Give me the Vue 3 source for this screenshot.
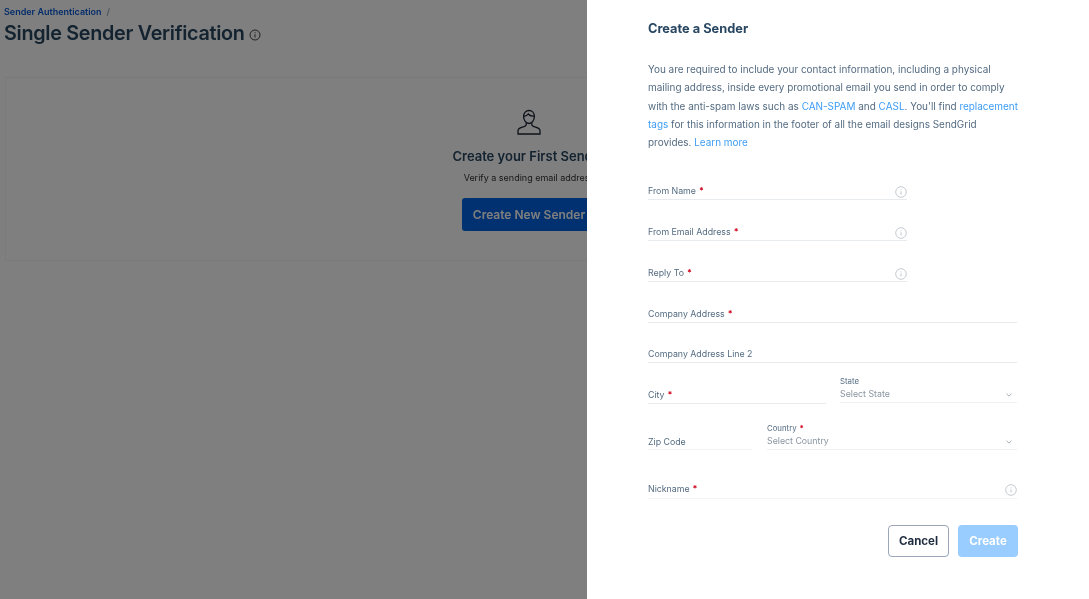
<template>
  <div class="page">
    <main class="content">
      <div class="crumbs"><a>Sender Authentication</a><span>/</span></div>
      <h1 class="title">
        Single Sender Verification
        <svg class="title-info" viewBox="0 0 12 12" width="12" height="12">
          <circle cx="6" cy="6" r="5" fill="none" stroke="currentColor" />
          <path d="M6 5.2v3.3M6 3.2v1" fill="none" stroke="currentColor" />
        </svg>
      </h1>
      <section class="empty-card">
        <svg class="user-icon" viewBox="0 0 24 26" width="24" height="26" fill="none" stroke="#1d2733" stroke-width="1.3">
          <path d="M6.6 7.5c0-3.6 2.300-6 5.400-6s5.400 2.400 5.400 6c0 3.800-2.400 7-5.400 7s-5.400-3.200-5.400-7z" />
          <path d="M6.800 7c2 .3 3.400-.5 4.400-2 1 1.400 3.400 2.300 6 2" />
          <path d="M9.200 13.500v2.300c0 1-.8 1.500-3 2.100C3 18.800 1 19.700 1 21.500V25h22v-3.500c0-1.800-2-2.700-5.200-3.600-2.200-.6-3-1.100-3-2.100v-2.300" />
        </svg>
        <h2>Create your First Sender</h2>
        <p>Verify a sending email address</p>
        <button class="primary">Create New Sender</button>
      </section>
    </main>

    <div class="overlay"></div>

    <aside class="drawer">
      <h3>Create a Sender</h3>
      <p class="intro">
        You are required to include your contact information, including a physical<br />
        mailing address, inside every promotional email you send in order to comply<br />
        with the anti-spam laws such as <a>CAN-SPAM</a> and <a>CASL</a>. You'll find <a>replacement</a><br />
        <a>tags</a> for this information in the footer of all the email designs SendGrid<br />
        provides. <a>Learn more</a>
      </p>

      <form class="form" @submit.prevent>
        <div v-for="f in topFields" :key="f.label" class="row" :class="{ short: f.info }">
          <label class="field">
            <span>{{ f.label }}<i v-if="f.required">*</i></span>
          </label>
          <svg v-if="f.info" class="info" viewBox="0 0 12 12" width="12" height="12">
            <circle cx="6" cy="6" r="5.300" fill="none" stroke="currentColor" stroke-width=".8" />
            <path d="M6 5.400v3M6 3.400v.9" fill="none" stroke="currentColor" stroke-width=".9" />
          </svg>
        </div>

        <div class="pair city-state">
          <label class="field"><span>City<i>*</i></span></label>
          <label class="select">
            <small>State</small>
            <span>Select State</span>
            <svg viewBox="0 0 8 5" width="6" height="4"><path d="M.7.8 4 4l3.300-3.200" fill="none" stroke="currentColor" /></svg>
          </label>
        </div>

        <div class="pair zip-country">
          <label class="field light"><span>Zip Code</span></label>
          <label class="select">
            <small>Country<i>*</i></small>
            <span>Select Country</span>
            <svg viewBox="0 0 8 5" width="6" height="4"><path d="M.7.8 4 4l3.300-3.200" fill="none" stroke="currentColor" /></svg>
          </label>
        </div>

        <div class="row nickname">
          <label class="field light"><span>Nickname<i>*</i></span></label>
          <svg class="info" viewBox="0 0 12 12" width="12" height="12">
            <circle cx="6" cy="6" r="5.300" fill="none" stroke="currentColor" stroke-width=".8" />
            <path d="M6 5.400v3M6 3.400v.9" fill="none" stroke="currentColor" stroke-width=".9" />
          </svg>
        </div>

        <div class="actions">
          <button class="cancel" type="button">Cancel</button>
          <button class="create" type="submit">Create</button>
        </div>
      </form>
    </aside>
  </div>
</template>

<script setup>
const topFields = [
  { label: 'From Name', required: true, info: true },
  { label: 'From Email Address', required: true, info: true },
  { label: 'Reply To', required: true, info: true },
  { label: 'Company Address', required: true },
  { label: 'Company Address Line 2' },
]
</script>

<style>
html, body { margin: 0; overflow: hidden; }
</style>

<style scoped>
.page {
  position: relative;
  width: 1089px;
  height: 599px;
  overflow: hidden;
  background: #fff;
  font-family: Inter, "Noto Sans", sans-serif;
  filter: blur(0.35px);
}

.content { padding: 6px 36px 0 4px; }
.crumbs { display: flex; gap: 5px; font-size: 9px; line-height: 11px; font-weight: 600; color: #9aa5b1; }
.crumbs a { color: #0a5bd3; }
.title { display: flex; align-items: center; margin: 2px 0 0; font-size: 19.800px; line-height: 28px; font-weight: 600; letter-spacing: -0.3px; color: #294661; }
.title-info { margin: 3px 0 0 4px; color: #444; }

.empty-card {
  display: flex;
  flex-direction: column;
  align-items: center;
  height: 184px;
  box-sizing: border-box;
  margin: 30px 0 0 1px;
  padding-top: 31px;
  border: 1px solid #f5f5f5;
}
.user-icon { display: block; }
.empty-card h2 { margin: 12px 0 0; font-size: 13px; line-height: 18px; font-weight: 600; color: #294661; }
.empty-card p { margin: 7px 0 0; font-size: 9px; line-height: 12px; color: #333; }
.primary { margin-top: 14px; width: 135px; height: 33px; border: 0; border-radius: 3px; background: #0263e0; color: #fff; font: 600 12px Inter, sans-serif; }

.overlay { position: absolute; inset: 0; background: rgba(0, 0, 0, 0.5); }

.drawer {
  position: absolute;
  top: 0;
  right: 0;
  bottom: 0;
  width: 502px;
  box-sizing: border-box;
  padding: 21px 72px 0 61px;
  background: #fff;
}
.drawer h3 { margin: 0; font-size: 12.800px; line-height: 16px; font-weight: 700; color: #294661; }
.intro { margin: 23px 0 0; font-size: 9.950px; line-height: 18.300px; color: #546b81; white-space: nowrap; }
.intro a { color: #3d9cf5; }

.form { display: flex; flex-direction: column; margin-top: 24px; }
.row { display: flex; align-items: center; height: 25px; margin-bottom: 16px; position: relative; }
.row:nth-child(4) { margin-bottom: 15px; }
.row.short .field { width: 259px; flex: none; }
.field {
  flex: 1;
  display: flex;
  align-items: flex-end;
  box-sizing: border-box;
  height: 25px;
  padding-bottom: 2px;
  border-bottom: 1px solid #e8ebee;
  font-size: 8.800px;
  line-height: 12px;
  color: #546b81;
}
.field.light { border-bottom-color: #f1f3f5; }
.field i, .select i { font-style: normal; color: #d0021b; margin-left: 3px; font-weight: 700; }
.info { color: #b5bec7; }
.short .info { position: absolute; left: 247px; top: 11px; }

.pair { display: flex; align-items: flex-end; }
.city-state { gap: 14px; height: 25px; }
.city-state .field { width: 178px; flex: none; }
.city-state .select { margin-bottom: 1px; }
.zip-country { gap: 15px; height: 30px; margin-top: 16px; }
.zip-country .field { width: 104px; flex: none; padding-bottom: 1px; }

.select {
  flex: 1;
  position: relative;
  display: flex;
  flex-direction: column;
  box-sizing: border-box;
  border-bottom: 1px solid #eef0f2;
  font-size: 8.800px;
  line-height: 12px;
  color: #8a95a1;
  padding-bottom: 2px;
}
.select small { font-size: 7.800px; line-height: 13px; color: #546b81; }
.select svg { position: absolute; right: 5px; bottom: 5px; color: #8a95a1; }

.nickname { margin: 24px 0 0; }
.nickname .field { padding-bottom: 3px; }
.nickname .info { position: absolute; right: 0; top: 10px; }

.actions { display: flex; justify-content: flex-end; gap: 9px; margin: 26px -1px 0 0; }
.actions button { width: 61px; height: 32px; border-radius: 4px; font: 700 11.500px Inter, sans-serif; box-sizing: border-box; }
.cancel { background: #fff; border: 1px solid #9aa6b8; color: #1f2c3f; }
.actions .create { width: 60px; background: #99ccff; border: 0; color: #fff; }
</style>
